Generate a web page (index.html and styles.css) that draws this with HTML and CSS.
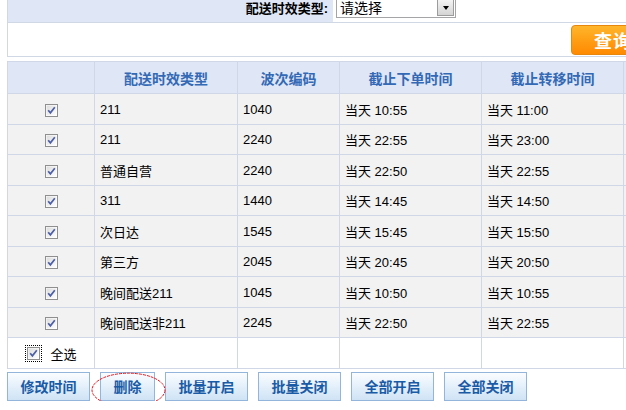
FILE: index.html
```html
<!DOCTYPE html>
<html>
<head>
<meta charset="utf-8">
<link rel="stylesheet" href="styles.css">
</head>
<body>
<svg class="defs" width="0" height="0">
  <defs>
    <linearGradient id="cbg" x1="0" y1="0" x2="1" y2="1">
      <stop offset="0" stop-color="#dcdcdc"/>
      <stop offset="1" stop-color="#ffffff"/>
    </linearGradient>
    <symbol id="cb" viewBox="0 0 13 13">
      <rect x="0.5" y="0.5" width="12" height="12" fill="#ffffff" stroke="#8f8f8f"/>
      <rect x="1.5" y="1.5" width="10" height="10" fill="url(#cbg)"/>
      <path d="M3.2 6.2 L5.4 8.8 L9.8 3.2" fill="none" stroke="#4b5ea6" stroke-width="1.7"/>
    </symbol>
  </defs>
</svg>
<div class="page">
  <table class="filter">
    <tr class="filter-row">
      <td class="filter-label">配送时效类型:</td>
      <td class="filter-field">
        <div class="select">
          <span class="select-text">请选择</span>
          <span class="select-btn"><span class="tri"></span></span>
        </div>
      </td>
    </tr>
    <tr class="action-row">
      <td colspan="2" class="action-cell"><button class="query">查询</button></td>
    </tr>
  </table>

  <table class="grid">
    <colgroup>
      <col class="c1"><col class="c2"><col class="c3"><col class="c4"><col class="c5"><col class="c6">
    </colgroup>
    <thead>
      <tr>
        <th></th><th>配送时效类型</th><th>波次编码</th><th>截止下单时间</th><th>截止转移时间</th><th></th>
      </tr>
    </thead>
    <tbody>
      <tr><td class="chk"><svg class="cb"><use href="#cb"/></svg></td><td>211</td><td>1040</td><td>当天 10:55</td><td>当天 11:00</td><td></td></tr>
      <tr><td class="chk"><svg class="cb"><use href="#cb"/></svg></td><td>211</td><td>2240</td><td>当天 22:55</td><td>当天 23:00</td><td></td></tr>
      <tr><td class="chk"><svg class="cb"><use href="#cb"/></svg></td><td>普通自营</td><td>2240</td><td>当天 22:50</td><td>当天 22:55</td><td></td></tr>
      <tr><td class="chk"><svg class="cb"><use href="#cb"/></svg></td><td>311</td><td>1440</td><td>当天 14:45</td><td>当天 14:50</td><td></td></tr>
      <tr><td class="chk"><svg class="cb"><use href="#cb"/></svg></td><td>次日达</td><td>1545</td><td>当天 15:45</td><td>当天 15:50</td><td></td></tr>
      <tr><td class="chk"><svg class="cb"><use href="#cb"/></svg></td><td>第三方</td><td>2045</td><td>当天 20:45</td><td>当天 20:50</td><td></td></tr>
      <tr><td class="chk"><svg class="cb"><use href="#cb"/></svg></td><td>晚间配送211</td><td>1045</td><td>当天 10:50</td><td>当天 10:55</td><td></td></tr>
      <tr><td class="chk"><svg class="cb"><use href="#cb"/></svg></td><td>晚间配送非211</td><td>2245</td><td>当天 22:50</td><td>当天 22:55</td><td></td></tr>
      <tr class="all-row">
        <td class="chk"><span class="all"><span class="focus"><svg class="cb"><use href="#cb"/></svg></span><span class="all-text">全选</span></span></td>
        <td></td><td></td><td></td><td></td><td></td>
      </tr>
    </tbody>
  </table>

  <div class="actions">
    <button class="btn">修改时间</button>
    <button class="btn">删除</button>
    <button class="btn">批量开启</button>
    <button class="btn">批量关闭</button>
    <button class="btn">全部开启</button>
    <button class="btn">全部关闭</button>
    <svg class="mark" width="75" height="36" viewBox="0 0 75 36"><ellipse cx="37.5" cy="18" rx="36.5" ry="16.8" fill="none" stroke="#e8141c" stroke-width="1" stroke-dasharray="3 1"/></svg>
  </div>
</div>
</body>
</html>
```

FILE: styles.css
```css
html, body {
  margin: 0;
  padding: 0;
  overflow: hidden;
  background: #ffffff;
}
body {
  font-family: "Liberation Sans", "Noto Sans CJK SC", sans-serif;
  font-size: 13px;
  color: #000000;
}
.defs {
  position: absolute;
  width: 0;
  height: 0;
}
.page {
  width: 760px;
  padding-left: 7px;
}

/* filter table */
.filter {
  border-collapse: collapse;
  width: 740px;
  border-left: 1px solid #d0d8e6;
  border-bottom: 1px solid #d0d8e6;
}
.filter td {
  padding: 0;
}
.filter-row td {
  height: 21px;
  border-bottom: 1px solid #d0d8e6;
  vertical-align: top;
}
.filter-label {
  width: 320px;
  background: #dfe7f6;
  text-align: right;
  font-weight: bold;
  padding-right: 5px !important;
  padding-top: 1px !important;
  font-size: 13px;
  line-height: 16px;
}
.filter-field {
  padding-left: 3px !important;
}
.select {
  display: flex;
  width: 118px;
  height: 17px;
  border: 1px solid #a5a5a8;
  border-top: none;
  background: #fff;
}
.select-text {
  flex: 1;
  font-size: 14px;
  line-height: 16px;
  padding-left: 3px;
}
.select-btn {
  width: 15px;
  height: 15px;
  margin: 0 1px 1px 0;
  border: 1px solid #9c9c9c;
  border-top: none;
  background: linear-gradient(#f4f4f4, #d4d4d4);
  display: flex;
  align-items: center;
  justify-content: center;
}
.tri {
  width: 0;
  height: 0;
  border-left: 3.5px solid transparent;
  border-right: 3.5px solid transparent;
  border-top: 4px solid #000;
}
.action-cell {
  height: 33px;
  padding-left: 563px !important;
  vertical-align: middle;
}
.query {
  display: block;
  width: 84px;
  height: 30px;
  border: 1px solid #e8870e;
  border-radius: 4px;
  background: linear-gradient(#ffb62c, #ff9a10 60%, #ff8a02);
  color: #ffffff;
  font-family: "Noto Sans CJK SC", sans-serif;
  font-weight: bold;
  font-size: 18px;
  line-height: 26px;
  text-align: left;
  padding: 0 0 0 22px;
  letter-spacing: 1px;
}

/* grid */
.grid {
  margin-top: 4px;
  border-collapse: collapse;
  table-layout: fixed;
  width: 716px;
}
.c1 { width: 87px; }
.c2 { width: 143px; }
.c3 { width: 102px; }
.c4 { width: 142px; }
.c5 { width: 142px; }
.c6 { width: 100px; }
.grid th, .grid td {
  border: 1px solid #d0d8e8;
  padding: 0 0 0 5px;
  text-align: left;
  white-space: nowrap;
}
.grid th {
  height: 31px;
  background: #dfe7f6;
  color: #3369b5;
  font-family: "Noto Sans CJK SC", sans-serif;
  font-weight: bold;
  font-size: 14px;
  text-align: center;
  padding: 0;
}
.grid tbody td {
  background: #f2f2f2;
  height: 29px;
  font-size: 13px;
}
.grid tbody tr:nth-child(odd) td {
  height: 30px;
}
.grid tbody tr:nth-child(even) td {
  height: 29px;
}
.grid tbody tr.all-row td {
  background: #ffffff;
  height: 30px;
}
.grid td.chk {
  text-align: center;
  padding: 0;
}
.cb {
  width: 13px;
  height: 13px;
  display: inline-block;
  vertical-align: middle;
}
.all {
  display: inline-flex;
  align-items: center;
  gap: 8px;
}
.focus {
  display: inline-flex;
  padding: 1px;
  border: 1px dotted #000;
}
.all-text {
  font-size: 13px;
}

/* buttons */
.actions {
  position: relative;
  display: flex;
  gap: 10px;
  margin-top: 3px;
}
.btn {
  height: 29px;
  padding: 0 12.5px;
  border: 1px solid #93b4db;
  background: linear-gradient(#fbfdff, #e6f1fb 45%, #cfe3f5);
  color: #1a5ba6;
  font-family: "Noto Sans CJK SC", sans-serif;
  font-weight: bold;
  font-size: 14px;
  line-height: 27px;
  margin: 0;
}
.mark {
  position: absolute;
  left: 84px;
  top: 0;
  pointer-events: none;
}
```
